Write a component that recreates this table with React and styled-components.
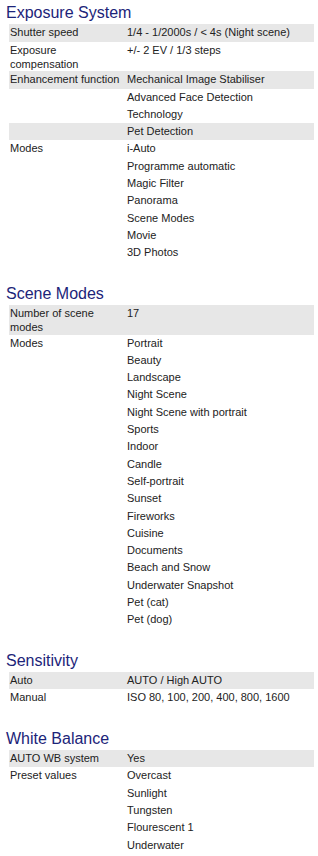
import React from "react"
import styled, { createGlobalStyle } from "styled-components"

const sections = [
  {
    title: "Exposure System",
    rows: [
      { label: "Shutter speed", values: ["1/4 - 1/2000s / < 4s (Night scene)"] },
      { label: "Exposure compensation", values: ["+/- 2 EV / 1/3 steps"] },
      { label: "Enhancement function", values: ["Mechanical Image Stabiliser"] },
      { label: "", values: [["Advanced Face Detection", "Technology"]] },
      { label: "", values: ["Pet Detection"] },
      {
        label: "Modes",
        values: [
          "i-Auto",
          "Programme automatic",
          "Magic Filter",
          "Panorama",
          "Scene Modes",
          "Movie",
          "3D Photos",
        ],
      },
    ],
  },
  {
    title: "Scene Modes",
    rows: [
      { label: "Number of scene modes", values: ["17"] },
      {
        label: "Modes",
        values: [
          "Portrait",
          "Beauty",
          "Landscape",
          "Night Scene",
          "Night Scene with portrait",
          "Sports",
          "Indoor",
          "Candle",
          "Self-portrait",
          "Sunset",
          "Fireworks",
          "Cuisine",
          "Documents",
          "Beach and Snow",
          "Underwater Snapshot",
          "Pet (cat)",
          "Pet (dog)",
        ],
      },
    ],
  },
  {
    title: "Sensitivity",
    rows: [
      { label: "Auto", values: ["AUTO / High AUTO"] },
      { label: "Manual", values: ["ISO 80, 100, 200, 400, 800, 1600"] },
    ],
  },
  {
    title: "White Balance",
    rows: [
      { label: "AUTO WB system", values: ["Yes"] },
      {
        label: "Preset values",
        values: ["Overcast", "Sunlight", "Tungsten", "Flourescent 1", "Underwater"],
      },
    ],
  },
]

function Value({ value }) {
  // a value may be split over two lines, as in the original sheet
  if (Array.isArray(value)) {
    return (
      <ValueLine>
        {value[0]}
        <br />
        {value[1]}
      </ValueLine>
    )
  }
  return <ValueLine>{value}</ValueLine>
}

function SpecSection({ title, rows }) {
  return (
    <Section>
      <Heading>{title}</Heading>
      <Table>
        {rows.map((row, i) => (
          <Row key={i} $shaded={i % 2 === 0}>
            <Label>{row.label}</Label>
            <Values>
              {row.values.map((v, j) => (
                <Value key={j} value={v} />
              ))}
            </Values>
          </Row>
        ))}
      </Table>
    </Section>
  )
}

export default function App() {
  return (
    <>
      <GlobalStyle />
      <Page>
        {sections.map(s => (
          <SpecSection key={s.title} title={s.title} rows={s.rows} />
        ))}
      </Page>
    </>
  )
}

const GlobalStyle = createGlobalStyle`
  html, body {
    margin: 0;
    padding: 0;
    background: #ffffff;
  }
  body {
    font-family: "Liberation Sans", Arial, sans-serif;
    color: #222222;
  }
`

const Page = styled.div`
  width: 318px;
  box-sizing: border-box;
  padding: 4px 4px 0 6px;
`

const Section = styled.section`
  margin-bottom: 23px;
`

const Heading = styled.h2`
  margin: 0 0 2px;
  font-size: 16px;
  line-height: 18.4px;
  font-weight: normal;
  color: #1c2479;
`

const Table = styled.div`
  margin-left: 3px;
  display: flex;
  flex-direction: column;
`

const Row = styled.div`
  display: grid;
  grid-template-columns: 117px 1fr;
  background: ${p => (p.$shaded ? "#e7e7e7" : "transparent")};
`

const Label = styled.div`
  padding: 1px 1px 0;
  font-size: 11px;
  line-height: 14.3px;
  color: #222222;
`

const Values = styled.div`
  padding-left: 1px;
  display: flex;
  flex-direction: column;
`

const ValueLine = styled.div`
  font-size: 11px;
  line-height: 17.3px;
  color: #222222;
`
